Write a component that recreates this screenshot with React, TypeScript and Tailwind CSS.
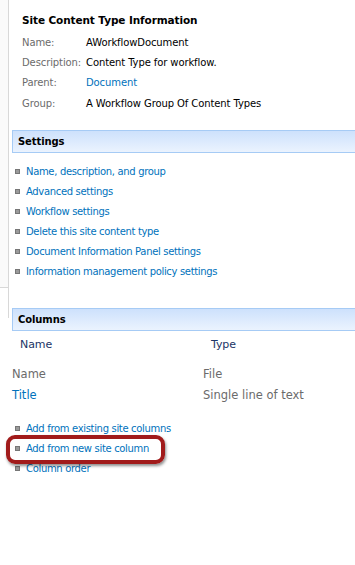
import React from 'react';

const font = "font-['DejaVu_Sans','Liberation_Sans',sans-serif]";

const infoRows: { label: string; value: string; link?: boolean }[] = [
  { label: 'Name:', value: 'AWorkflowDocument' },
  { label: 'Description:', value: 'Content Type for workflow.' },
  { label: 'Parent:', value: 'Document', link: true },
  { label: 'Group:', value: 'A Workflow Group Of Content Types' },
];

const settingsLinks = [
  'Name, description, and group',
  'Advanced settings',
  'Workflow settings',
  'Delete this site content type',
  'Document Information Panel settings',
  'Information management policy settings',
];

const columnRows: { name: string; type: string; link?: boolean }[] = [
  { name: 'Name', type: 'File' },
  { name: 'Title', type: 'Single line of text', link: true },
];

const Bullet = () => (
  <span className="w-[5px] h-[5px] bg-[#9a9a9a] border border-[#777] shrink-0" />
);

const LinkItem = ({ text }: { text: string }) => (
  <div className="flex items-center h-5 pl-[6px] gap-[6px]">
    <Bullet />
    <span className="text-[#0072bc] whitespace-nowrap tracking-[-0.33px]">{text}</span>
  </div>
);

const SectionHeader = ({ title }: { title: string }) => (
  <div className="ml-[3px] h-[23px] flex items-center pl-[5px] border-y border-l border-[#a6cbf5] bg-gradient-to-b from-[#cde1fc] to-[#ebf3fe] font-bold text-black text-[10px]">
    {title}
  </div>
);

export default function App() {
  return (
    <div className={`w-[355px] h-[565px] bg-white overflow-hidden text-[10px] tracking-[-0.1px] ${font}`}>
      <div className="flex">
        {/* left nav remnant */}
        <div className="w-[9px] shrink-0 flex flex-col">
          <div className="h-[288px] bg-[#fafafa] border-r border-b border-[#d8d8d8]" />
          <div className="h-[30px] border-r border-[#d8d8d8]" />
        </div>

        <div className="flex-1 min-w-0 relative">
          <div className="pt-[11px] pl-[13px]">
            <div className="font-bold text-black text-[10.5px] h-[19px] flex items-center">Site Content Type Information</div>
            {infoRows.map((r, i) => (
              <div key={r.label} className={`flex items-center ${i === 0 ? 'h-[22px] pt-[2px]' : 'h-[20.5px]'}`}>
                <span className="w-[64px] text-[#6b6b6b]">{r.label}</span>
                <span className={r.link ? 'text-[#0072bc]' : 'text-black'}>{r.value}</span>
              </div>
            ))}
          </div>

          <div className="mt-[16px]">
            <SectionHeader title="Settings" />
          </div>
          <div className="mt-[9px]">
            {settingsLinks.map(t => <LinkItem key={t} text={t} />)}
          </div>

          <div className="mt-[26px]">
            <SectionHeader title="Columns" />
          </div>
          <div className="flex h-[30px] items-center text-[#1b3566] text-[11px]">
            <span className="w-[202px] pl-[11px]">Name</span>
            <span>Type</span>
          </div>
          <div className="mt-[4px] text-[11.5px] tracking-[0px]">
            {columnRows.map(r => (
              <div key={r.name} className="flex h-[21px] items-center">
                <span className={`w-[194px] pl-[3px] ${r.link ? 'text-[#0072bc]' : 'text-[#6b6b6b]'}`}>{r.name}</span>
                <span className="text-[#6b6b6b]">{r.type}</span>
              </div>
            ))}
          </div>

          <div className="mt-[12px] relative">
            <LinkItem text="Add from existing site columns" />
            <LinkItem text="Add from new site column" />
            <LinkItem text="Column order" />
            {/* red annotation highlight */}
            <div className="absolute left-[-3px] top-[16px] w-[159px] h-[29px] rounded-[9px] border-[4px] border-[#a11b1b] shadow-[1px_2px_3px_rgba(0,0,0,0.45)]" />
          </div>
        </div>
      </div>
    </div>
  );
}
